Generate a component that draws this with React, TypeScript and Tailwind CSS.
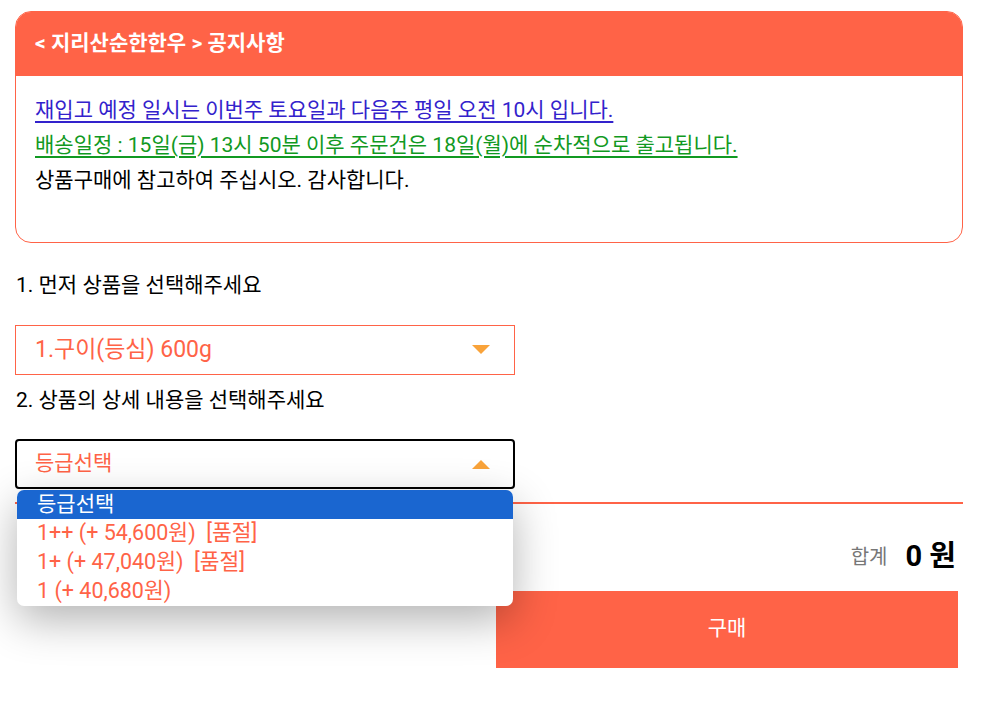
import { useState } from 'react';

const gradeOptions = [
  { label: '등급선택', selected: true },
  { label: '1++ (+ 54,600원)  [품절]', selected: false },
  { label: '1+ (+ 47,040원)  [품절]', selected: false },
  { label: '1 (+ 40,680원)', selected: false },
];

function Arrow({ up }: { up?: boolean }) {
  return (
    <svg width="18" height="10" viewBox="0 0 18 10" className="shrink-0">
      {up ? (
        <polygon points="0,10 18,10 9,1" fill="#f9a33a" />
      ) : (
        <polygon points="0,0 18,0 9,9" fill="#f9a33a" />
      )}
    </svg>
  );
}

export default function App() {
  const [open] = useState(true);

  return (
    <div
      className="w-[988px] h-[728px] bg-white overflow-hidden"
      style={{ fontFamily: "Roboto, 'Noto Sans CJK KR', sans-serif" }}
    >
      <div className="ml-[15px] w-[948px] pt-[11px]">
        <div className="border border-[#ff6347] rounded-[16px] overflow-hidden">
          <div className="h-[64px] bg-[#ff6347] flex items-center px-[19px]">
            <span className="text-white text-[21px] font-bold">
              &lt; 지리산순한한우 &gt; 공지사항
            </span>
          </div>
          <div className="px-[19px] pt-[17px] pb-[44px] text-[21px] leading-[35px]">
            <p className="text-[#3322cc] underline decoration-2 underline-offset-[4px]">
              재입고 예정 일시는 이번주 토요일과 다음주 평일 오전 10시 입니다.
            </p>
            <p className="text-[#119922] underline decoration-2 underline-offset-[4px]">
              배송일정 : 15일(금) 13시 50분 이후 주문건은 18일(월)에 순차적으로 출고됩니다.
            </p>
            <p className="text-black">상품구매에 참고하여 주십시오. 감사합니다.</p>
          </div>
        </div>

        <p className="mt-[29px] text-[21px] leading-[27px] text-black pl-[1px]">
          1. 먼저 상품을 선택해주세요
        </p>
        <div className="mt-[26px] w-[500px] h-[50px] border border-[#ff6347] flex items-center justify-between pl-[19px] pr-[24px]">
          <span className="text-[23px] text-[#ff6347]">1.구이(등심) 600g</span>
          <Arrow />
        </div>

        <p className="mt-[12px] text-[21px] leading-[27px] text-black pl-[1px]">
          2. 상품의 상세 내용을 선택해주세요
        </p>
        <div className="relative mt-[25px] w-[500px]">
          <div className="h-[50px] border-2 border-black rounded-[4px] flex items-center justify-between pl-[18px] pr-[23px]">
            <span className="text-[21px] text-[#ff6347]">등급선택</span>
            <Arrow up />
          </div>
          {open && (
            <ul className="absolute z-10 left-[2px] top-[51px] w-[496px] bg-white rounded-[7px] overflow-hidden shadow-[0_14px_44px_rgba(0,0,0,0.3)]">
              {gradeOptions.map((opt) => (
                <li
                  key={opt.label}
                  className={
                    opt.selected
                      ? 'h-[29px] flex items-center pl-[20px] text-[21px] bg-[#1a66d0] text-white whitespace-pre'
                      : 'h-[29px] flex items-center pl-[20px] text-[21.5px] text-[#ff6347] whitespace-pre'
                  }
                >
                  {opt.label}
                </li>
              ))}
            </ul>
          )}
        </div>

        <div className="mt-[13px] h-[2px] bg-[#ff6347]" />

        <div className="mt-[31px] flex items-center justify-end gap-[18px] pr-[7px]">
          <span className="text-[20px] text-[#777]">합계</span>
          <span className="text-[29px] font-bold text-black">0 원</span>
        </div>

        <div className="flex justify-end pr-[5px] mt-[12px]">
          <button className="w-[462px] h-[77px] bg-[#ff6347] text-white text-[21px]">
            구매
          </button>
        </div>
      </div>
    </div>
  );
}
